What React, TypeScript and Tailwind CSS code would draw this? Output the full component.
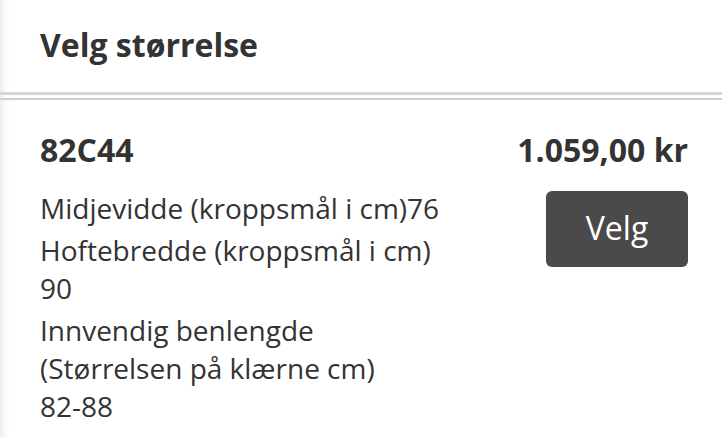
import React from "react";

export default function App() {
  return (
    <div
      className="w-[722px] h-[437px] overflow-hidden bg-[linear-gradient(to_right,#ececec,#fafafa_5px,#fff_10px)] text-[#333]"
      style={{ fontFamily: '"Open Sans", sans-serif' }}
    >
      <div className="h-[92px] flex items-center pl-[40px]">
        <h1 className="text-[32px] font-bold leading-none mt-[-2px]">Velg størrelse</h1>
      </div>
      <div className="h-[3px] bg-[#d6d6d6]" />
      <div className="h-[3px]" />
      <div className="h-[2px] bg-[#cfcfcf]" />
      <div className="flex pl-[40px] pr-[34px] pt-[30px]">
        <div className="flex-1">
          <div className="text-[32px] font-bold leading-[40px]">82C44</div>
          <div className="mt-[19px] text-[28px] leading-[38px]">
            <div>Midjevidde (kroppsmål i cm)76</div>
            <div className="mt-[4px]">
              <div>Hoftebredde (kroppsmål i cm)</div>
              <div>90</div>
            </div>
            <div className="mt-[4px]">
              <div className="w-[360px]">Innvendig benlengde (Størrelsen på klærne cm)</div>
              <div>82-88</div>
            </div>
          </div>
        </div>
        <div className="flex flex-col items-end">
          <div className="text-[32px] font-bold leading-[40px]">1.059,00 kr</div>
          <button className="mt-[21px] w-[142px] h-[76px] rounded-[6px] bg-[#4a4a4a] text-white text-[32px] leading-none pb-[2px]">
            Velg
          </button>
        </div>
      </div>
    </div>
  );
}
